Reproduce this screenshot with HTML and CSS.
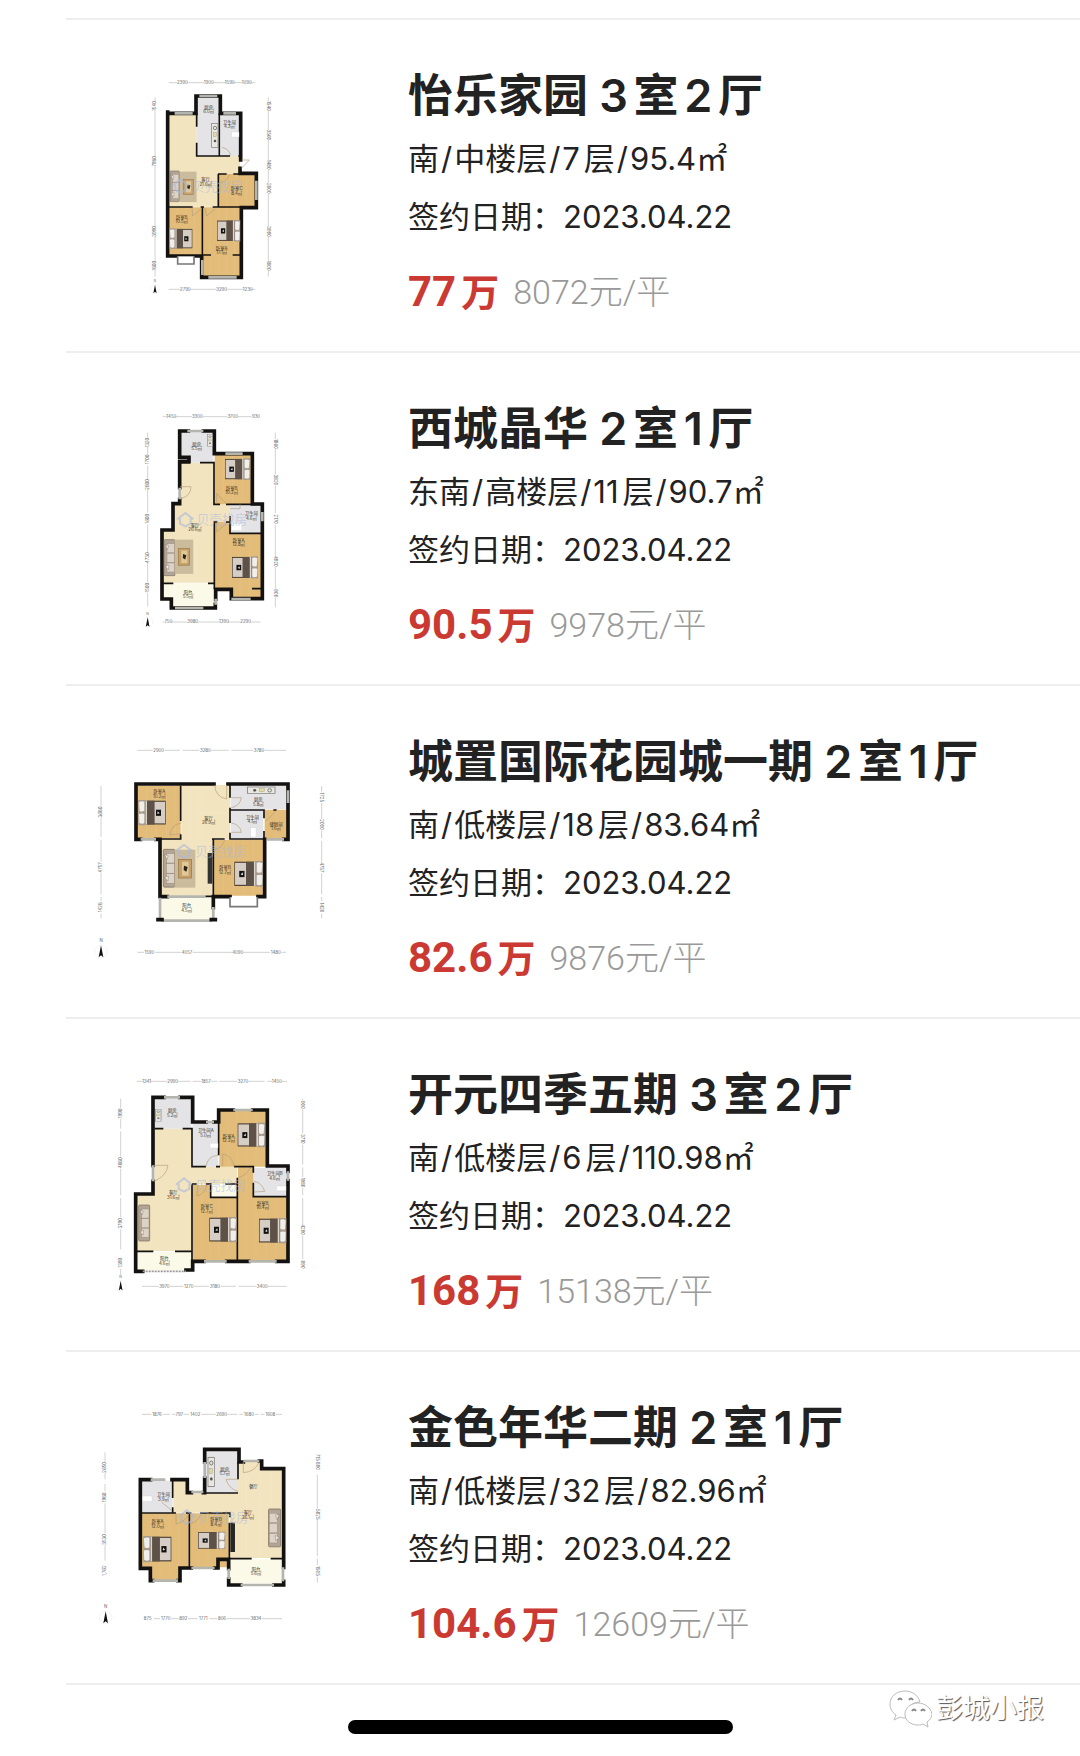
FILE: index.html
```html
<!DOCTYPE html>
<html lang="zh-CN">
<head>
  <meta charset="utf-8">
  <meta name="viewport" content="width=device-width, initial-scale=1.0">
  <title>成交房源</title>
  <link rel="stylesheet" href="styles.css">
</head>
<body>

  <!-- Shared furniture for the floor plans -->
  <svg class="defs" width="0" height="0" aria-hidden="true">
    <defs>
      <g id="bed">
        <rect x="0" y="2" width="72" height="66" fill="#453b33"/>
        <rect x="2" y="5" width="32" height="60" fill="#d6cec5"/>
        <rect x="34" y="2" width="22" height="66" fill="#5d5148"/>
        <rect x="56" y="2" width="5" height="66" fill="#ddd6cd"/>
        <rect x="61" y="0" width="21" height="70" fill="#a89c90"/>
        <path d="M64 5 Q72 2 80 6 L78 31 Q70 34 64 30 Z M64 39 Q72 36 80 39 L79 64 Q70 68 64 64 Z" fill="#f1efec"/>
        <rect x="14" y="27" width="15" height="17" fill="#111"/>
        <path d="M18 37 L24 31 L25 39 Z" fill="#ddd"/>
      </g>
      <g id="sofa">
        <rect x="0" y="0" width="33" height="108" rx="3" fill="#b3a594" stroke="#75695d" stroke-width="2"/>
        <rect x="9" y="12" width="22" height="27" fill="#dcd2c6" stroke="#887b6e" stroke-width="1"/>
        <rect x="9" y="41" width="22" height="27" fill="#dcd2c6" stroke="#887b6e" stroke-width="1"/>
        <rect x="9" y="70" width="22" height="27" fill="#dcd2c6" stroke="#887b6e" stroke-width="1"/>
        <path d="M4 15 L14 18 L10 30 Z M4 80 L15 76 L13 91 Z" fill="#eee9e3" stroke="#665b51" stroke-width="1"/>
      </g>
      <g id="rug">
        <rect x="0" y="0" width="62" height="114" fill="#cbbb9d"/>
        <rect x="12" y="29" width="38" height="56" fill="#c6a16a" stroke="#927340" stroke-width="2"/>
        <rect x="22" y="36" width="20" height="42" fill="#dfc798"/>
        <path d="M28 48 L39 52 L35 66 L27 61 Z" fill="#29231c"/>
      </g>
      <g id="stove">
        <rect x="0" y="0" width="19" height="72" fill="#e9e7df" stroke="#777" stroke-width="2"/>
        <circle cx="10" cy="14" r="5" fill="none" stroke="#555" stroke-width="2"/>
        <rect x="5" y="28" width="9" height="12" fill="#e4dc9b" stroke="#888" stroke-width="1"/>
        <circle cx="10" cy="53" r="4" fill="#555"/>
      </g>
      <g id="north">
        <circle cx="0" cy="0" r="19" fill="none" stroke="#eee" stroke-width="2"/>
        <path d="M0 -18 L7 18 L0 12 L-7 18 Z" fill="#111"/>
        <text class="dim" x="0" y="-28">N</text>
      </g>
      <g id="brand">
        <path d="M0 23 L24 4 L48 23 M8 20 V36 L24 44 L40 36 V20" class="brand-mark"/>
        <text class="brand-name" x="58" y="38">贝壳找房</text>
      </g>
    </defs>
  </svg>

  <ul class="deal-list">

    <li class="deal">
      <svg class="plan" viewBox="-150 18 780 720" role="img" aria-label="怡乐家园户型图">
        <path class="living" d="M118 162H200V288H330V342H265V440H118Z"/>
        <path class="tile" d="M200 108H268V288H200Z M272 162H330V288H272Z"/>
        <path class="wood" d="M266 342H378V442H266Z M118 442H215V585H118Z M218 442H333V650H218Z"/>
        <path class="grain" d="M290 344V440M320 344V440M350 344V440M142 444V583M168 444V583M194 444V583M240 444V648M265 444V648M290 444V648M313 444V648"/>
        <path class="wall" d="M114 160H198V108H271V160H332V300M330 325V340H379V443H334V652H215V588H113V156"/>
        <path class="wall thin" d="M200 160V200M200 248V288H300M268 160V288M325 288H334M265 342V440M264 342H290M310 342H332M114 441H188M212 441H222M248 441H378M217 441V588M220 585H243M308 585H334"/>
        <path class="window" d="M134 160H188M208 108H262M280 160H318M379 362V420M235 652H320M217 600V645"/>
        <path class="bay" d="M143 589V612H192V589"/>
        <path class="door" d="M334 325L358 300H335M276 262Q296 266 302 286M186 444L188 468L214 446M224 444L230 468L256 446M268 368Q290 366 298 345"/>
        <use href="#stove" x="245" y="190"/>
        <use href="#sofa" transform="translate(120 333) scale(.85)"/>
        <use href="#rug" transform="translate(150 335) scale(.8)"/>
        <use href="#bed" transform="translate(261 480) scale(.85 .92)"/>
        <use href="#bed" transform="translate(187 505) scale(-.84 .88)"/>
        <rect class="basin" x="305" y="216" width="22" height="15"/>
        <use href="#brand" x="128" y="354"/>
        <g class="label">
          <text x="236" y="147">厨房</text><text x="236" y="160">6.0㎡</text>
          <text x="298" y="192">卫生间</text><text x="298" y="205">4.3㎡</text>
          <text x="227" y="364">客厅</text><text x="227" y="377">21.6㎡</text>
          <text x="320" y="391">卧室C</text><text x="320" y="404">8.4㎡</text>
          <text x="155" y="477">卧室B</text><text x="155" y="490">10.5㎡</text>
          <text x="275" y="569">卧室A</text><text x="275" y="582">17.1㎡</text>
        </g>
        <path class="rule" d="M116 68H142M172 68H222M250 68H288M310 68H338M362 68H376M116 688H152M180 688H260M290 688H342M364 688H376M75 112V125M75 150V290M75 318V500M75 528V604M75 630V650M415 112V125M415 150V210M415 240V300M415 328V370M415 400V500M415 530V604M415 630V650"/>
        <g class="dim">
          <text x="157" y="72">2390</text><text x="236" y="72">1900</text><text x="299" y="72">1590</text><text x="350" y="72">1090</text>
          <text x="166" y="692">2790</text><text x="275" y="692">3290</text><text x="353" y="692">1230</text>
          <text transform="rotate(-90 79 138)" x="79" y="138">1540</text><text transform="rotate(-90 79 304)" x="79" y="304">7980</text><text transform="rotate(-90 79 514)" x="79" y="514">3990</text><text transform="rotate(-90 79 617)" x="79" y="617">1800</text>
          <text transform="rotate(90 411 138)" x="411" y="138">1540</text><text transform="rotate(90 411 225)" x="411" y="225">3560</text><text transform="rotate(90 411 314)" x="411" y="314">1480</text><text transform="rotate(90 411 385)" x="411" y="385">2800</text><text transform="rotate(90 411 515)" x="411" y="515">3990</text><text transform="rotate(90 411 617)" x="411" y="617">1800</text>
        </g>
        <use href="#north" transform="translate(75 687) scale(.7)"/>
      </svg>
      <div class="info">
        <h2>怡乐家园 3室2厅</h2>
        <p class="detail">南<i>/</i>中楼层<i>/</i>7层<i>/</i>95.4㎡</p>
        <p class="detail">签约日期：2023.04.22</p>
        <p class="price"><strong>77<span>万</span></strong><em>8072元/平</em></p>
      </div>
    </li>

    <li class="deal">
      <svg class="plan" viewBox="-120 9 780 720" role="img" aria-label="西城晶华户型图">
        <path class="living" d="M180 200H282V325H330V378H282V560H130V402H160V325H180Z"/>
        <path class="tile" d="M182 106H280V200H182Z M330 328H425V410H330Z"/>
        <path class="wood" d="M284 175H395V325H284Z M284 378H330V412H425V608H335V580H284Z"/>
        <path class="balcony" d="M130 562H282V635H155V608H130Z"/>
        <path class="grain" d="M310 178V322M338 178V322M366 178V322M306 400V578M332 415V578M360 415V606M388 415V606"/>
        <path class="wall" d="M205 105H179V184H207V197H179V275M179 310V323H159V402H126V609H154V636H286V625M250 105H283V173H397V324H427V608H334V580H287V610"/>
        <path class="wall thin" d="M180 200H210M240 200H282V325H300M318 325H430M283 378H292M318 378H330M330 360V412H428M283 376V580M128 562H160M264 562H284M396 578H428"/>
        <path class="window" d="M202 105H250M316 173H368M427 348V376M334 609H392M165 636H250M179 275V310M287 608V626"/>
        <path class="door" d="M180 272H213Q213 300 182 308M290 322V292L318 322M290 380V408L318 382M330 338H360V325"/>
        <rect class="basin" x="335" y="382" width="30" height="22"/>
        <use href="#stove" transform="translate(262 115) scale(.8 .5)"/>
        <use href="#sofa" x="132" y="431"/>
        <use href="#rug" transform="translate(164 431) scale(.9)"/>
        <use href="#bed" transform="translate(315 187) scale(.92)"/>
        <use href="#bed" transform="translate(336 481) scale(.95)"/>
        <use href="#brand" x="172" y="347"/>
        <g class="label">
          <text x="230" y="150">厨房</text><text x="230" y="163">5.5㎡</text>
          <text x="335" y="282">卧室B</text><text x="335" y="295">10.2㎡</text>
          <text x="394" y="358">卫生间</text><text x="394" y="371">4.6㎡</text>
          <text x="225" y="392">客厅</text><text x="225" y="405">26.6㎡</text>
          <text x="356" y="437">卧室A</text><text x="356" y="450">12.8㎡</text>
          <text x="204" y="594">阳台</text><text x="204" y="607">5.5㎡</text>
        </g>
        <path class="rule" d="M128 62H142M166 62H216M248 62H322M354 62H395M128 678H134M154 678H202M234 678H300M324 678H362M392 678H422M83 110V125M83 152V176M83 208V250M83 280V350M83 385V470M83 500V560M83 590V632M466 110V130M466 158V236M466 268V352M466 386V480M466 512V580M466 605V634"/>
        <g class="dim">
          <text x="154" y="66">1450</text><text x="232" y="66">3300</text><text x="338" y="66">3700</text><text x="408" y="66">930</text>
          <text x="145" y="682">750</text><text x="218" y="682">3980</text><text x="312" y="682">1390</text><text x="377" y="682">2290</text>
          <text transform="rotate(-90 87 140)" x="87" y="140">1320</text><text transform="rotate(-90 87 190)" x="87" y="190">1700</text><text transform="rotate(-90 87 265)" x="87" y="265">2800</text><text transform="rotate(-90 87 368)" x="87" y="368">1600</text><text transform="rotate(-90 87 485)" x="87" y="485">4730</text><text transform="rotate(-90 87 575)" x="87" y="575">1500</text>
          <text transform="rotate(90 462 144)" x="462" y="144">1860</text><text transform="rotate(90 462 252)" x="462" y="252">3820</text><text transform="rotate(90 462 370)" x="462" y="370">2170</text><text transform="rotate(90 462 496)" x="462" y="496">4920</text><text transform="rotate(90 462 592)" x="462" y="592">900</text>
        </g>
        <use href="#north" transform="translate(83 678) scale(.8)"/>
      </svg>
      <div class="info">
        <h2>西城晶华 2室1厅</h2>
        <p class="detail">东南<i>/</i>高楼层<i>/</i>11层<i>/</i>90.7㎡</p>
        <p class="detail">签约日期：2023.04.22</p>
        <p class="price"><strong>90.5<span>万</span></strong><em>9978元/平</em></p>
      </div>
    </li>

    <li class="deal">
      <svg class="plan" viewBox="0 3 780 720" role="img" aria-label="城置国际花园城一期户型图">
        <path class="living" d="M304 162H450V324H398V494H244V324H304Z"/>
        <path class="tile" d="M452 162H622V234H452Z M452 238H550V324H452Z"/>
        <path class="wood" d="M172 164H302V322H172Z M400 326H550V494H400Z M554 236H622V326H554Z"/>
        <path class="balcony" d="M242 498H400V566H242Z M452 498H530V526H452Z"/>
        <path class="grain" d="M200 166V320M230 166V320M260 166V320M285 166V320M430 328V492M460 328V492M490 328V492M520 328V492M590 238V324M330 165V492M360 165V492M250 400H396M306 245H450"/>
        <path class="wall" d="M402 159H168V325H182M228 325H240V497H262M444 159H624V325H612M554 325V497H534M450 497H400V530"/>
        <path class="wall thin" d="M302 164V270M302 310V324H240M450 160V200M450 230V276M450 305V324H552M452 237H552V262M552 300V326M400 324V500M396 324H434M376 496H400M580 237H590"/>
        <path class="window" d="M182 325H228M624 178V216M560 325H612M240 500V562M400 528V562M244 569H396M262 497H376"/>
        <path class="bay" d="M450 499V527H532V499"/>
        <path class="wall" d="M234 566H246M394 566H406"/>
        <path class="door" d="M404 162Q406 198 440 204V162M454 200H484Q480 225 454 230M454 276Q480 280 484 304H454M304 276Q274 280 270 312L302 308M402 356Q428 352 434 326M556 272L592 236"/>
        <use href="#stove" transform="translate(585 168) rotate(90) scale(1 1.15)"/>
        <rect class="basin" x="512" y="290" width="16" height="28"/>
        <use href="#sofa" transform="translate(250 355) scale(1.05)"/>
        <use href="#rug" x="284" y="356"/>
        <rect x="383" y="366" width="14" height="92" fill="#333"/>
        <use href="#bed" transform="translate(257 207) scale(-1 1.08)"/>
        <use href="#bed" transform="translate(463 390) scale(1.05 1.1)"/>
        <use href="#brand" x="288" y="337"/>
        <g class="label">
          <text x="238" y="187">卧室A</text><text x="238" y="201">10.2㎡</text>
          <text x="386" y="266">客厅</text><text x="386" y="280">26.9㎡</text>
          <text x="535" y="211">厨房</text><text x="535" y="225">5.8㎡</text>
          <text x="517" y="263">卫生间</text><text x="517" y="277">4.1㎡</text>
          <text x="588" y="284">储物间</text><text x="588" y="298">1.6㎡</text>
          <text x="435" y="414">卧室B</text><text x="435" y="428">12.7㎡</text>
          <text x="320" y="528">阳台</text><text x="320" y="542">4.5㎡</text>
        </g>
        <path class="rule" d="M172 58H218M254 58H300M308 58H358M394 58H446M454 58H520M554 58H618M172 664H192M226 664H304M338 664H456M490 664H570M604 664H618M63 165V226M63 260V318M63 326V392M63 426V490M63 498V510M63 548V562M725 165V182M725 216V264M725 298V322M725 330V392M725 426V490M725 498V510M725 548V562"/>
        <g class="dim">
          <text x="236" y="62">2900</text><text x="376" y="62">3280</text><text x="537" y="62">3780</text>
          <text x="208" y="668">1590</text><text x="321" y="668">4057</text><text x="473" y="668">4090</text><text x="587" y="668">1480</text>
          <text transform="rotate(-90 67 243)" x="67" y="243">3680</text><text transform="rotate(-90 67 409)" x="67" y="409">4757</text><text transform="rotate(-90 67 529)" x="67" y="529">1428</text>
          <text transform="rotate(90 721 199)" x="721" y="199">1725</text><text transform="rotate(90 721 281)" x="721" y="281">2000</text><text transform="rotate(90 721 409)" x="721" y="409">4757</text><text transform="rotate(90 721 529)" x="721" y="529">1428</text>
        </g>
        <use href="#north" x="63" y="661"/>
      </svg>
      <div class="info">
        <h2>城置国际花园城一期 2室1厅</h2>
        <p class="detail">南<i>/</i>低楼层<i>/</i>18层<i>/</i>83.64㎡</p>
        <p class="detail">签约日期：2023.04.22</p>
        <p class="price"><strong>82.6<span>万</span></strong><em>9876元/平</em></p>
      </div>
    </li>

    <li class="deal">
      <svg class="plan" viewBox="-60 -3 780 720" role="img" aria-label="开元四季五期户型图">
        <path class="living" d="M163 188H274V302H412V354H274V555H110V384H163Z"/>
        <path class="tile" d="M164 98H274V188H164Z M278 170H355V302H278Z M460 306H562V390H460Z"/>
        <path class="wood" d="M358 132H498V302H358Z M278 356H332V394H412V584H278Z M414 304H460V392H562V584H414Z"/>
        <path class="balcony" d="M110 558H274V614H110Z M334 356H410V392H334Z"/>
        <path class="grain" d="M385 135V300M412 135V300M440 135V300M468 135V300M304 358V582M330 396V582M356 396V582M384 396V582M440 306V582M468 394V582M498 394V582M528 394V582"/>
        <path class="wall" d="M192 94H159V298M159 346V384H107V616H128M240 94H278V168H318M342 168H356V132H400M458 132H502V300H564V316M564 344V586H530M446 586H380M312 586H278V612H258"/>
        <path class="wall thin" d="M164 188H190M248 188H276V302H318M348 302H360M356 132V268M402 302H460V320M460 350V392H566M276 354H290M318 354H332V394H412M376 354H412V586M412 335V354M276 354V586M108 556H160M225 556H276M312 586H278"/>
        <path class="window" d="M192 94H240M318 168H342M400 132H458M564 316V344M312 586H380M446 586H530M159 298V346"/>
        <path d="M128 616H258" fill="none" stroke="#999" stroke-width="5" stroke-dasharray="6 3"/>
        <path class="door" d="M160 298H204Q200 330 162 346M318 302Q322 270 354 268M368 302V264Q398 270 402 302M462 346Q486 350 494 376L462 378M292 356V390Q316 382 320 356M416 334Q436 330 452 306"/>
        <use href="#stove" transform="translate(166 130) scale(.9 .5)"/>
        <path class="basin" d="M330 232H354V246H330Z M530 360H558V374H530Z"/>
        <use href="#sofa" x="116" y="417"/>
        <use href="#bed" transform="translate(413 170) scale(1 1.05)"/>
        <use href="#bed" transform="translate(328 453) scale(1 1.08)"/>
        <use href="#bed" transform="translate(477 456) scale(1 1.08)"/>
        <use href="#brand" x="228" y="333"/>
        <g class="label">
          <text x="217" y="138">厨房</text><text x="217" y="152">5.2㎡</text>
          <text x="317" y="199">卫生间A</text><text x="317" y="213">5.0㎡</text>
          <text x="386" y="215">卧室A</text><text x="386" y="229">12.2㎡</text>
          <text x="524" y="327">卫生间B</text><text x="524" y="341">4.6㎡</text>
          <text x="220" y="384">客厅</text><text x="220" y="398">31.6㎡</text>
          <text x="320" y="426">卧室C</text><text x="320" y="440">12.7㎡</text>
          <text x="488" y="416">卧室B</text><text x="488" y="430">16.4㎡</text>
          <text x="193" y="582">阳台</text><text x="193" y="596">4.6㎡</text>
        </g>
        <path class="rule" d="M110 46H128M152 46H202M234 46H272M278 46H304M332 46H352M358 46H412M446 46H494M502 46H516M544 46H562M126 661H176M210 661H250M282 661H328M362 661H408M416 661H470M504 661H560M62 98V126M62 158V188M62 196V272M62 308V388M62 396V454M62 490V550M62 608V628M608 98V104M608 130V202M608 236V296M608 304V334M608 366V388M608 396V474M608 508V580"/>
        <g class="dim">
          <text x="140" y="50">1341</text><text x="218" y="50">2990</text><text x="318" y="50">1857</text><text x="429" y="50">3270</text><text x="530" y="50">1450</text>
          <text x="193" y="665">3970</text><text x="266" y="665">1270</text><text x="345" y="665">3180</text><text x="487" y="665">3400</text>
          <text transform="rotate(-90 66 142)" x="66" y="142">1990</text><text transform="rotate(-90 66 290)" x="66" y="290">4880</text><text transform="rotate(-90 66 472)" x="66" y="472">3790</text><text transform="rotate(-90 66 590)" x="66" y="590">1390</text>
          <text transform="rotate(90 604 117)" x="604" y="117">900</text><text transform="rotate(90 604 219)" x="604" y="219">3710</text><text transform="rotate(90 604 350)" x="604" y="350">1980</text><text transform="rotate(90 604 491)" x="604" y="491">4290</text><text transform="rotate(90 604 596)" x="604" y="596">890</text>
        </g>
        <use href="#north" transform="translate(62 659) scale(.8)"/>
      </svg>
      <div class="info">
        <h2>开元四季五期 3室2厅</h2>
        <p class="detail">南<i>/</i>低楼层<i>/</i>6层<i>/</i>110.98㎡</p>
        <p class="detail">签约日期：2023.04.22</p>
        <p class="price"><strong>168<span>万</span></strong><em>15138元/平</em></p>
      </div>
    </li>

    <li class="deal">
      <svg class="plan" viewBox="0 -8 780 720" role="img" aria-label="金色年华二期户型图">
        <path class="living" d="M280 240H320V278H474V180H545V204H606V472H450V336H280Z"/>
        <path class="tile" d="M376 148H474V276H376Z M186 240H278V334H186Z"/>
        <path class="wood" d="M186 338H326V502H298V538H212V502H186Z M330 338H446V500H330Z"/>
        <path class="balcony" d="M450 476H606V548H450Z"/>
        <path class="grain" d="M212 340V536M240 340V536M268 340V536M296 340V500M356 340V498M384 340V498M412 340V498M500 210V470M540 210V470M575 210V470"/>
        <path class="wall" d="M212 237H181V503H211V540H218M276 237H322V276H334M370 276H374V232M374 184V146H477V184H490M538 181H545V204H611V500M611 542V553H582M482 553H446V535M446 504V476H414V502H404M334 502H300V540H294"/>
        <path class="wall thin" d="M278 238V292M278 320V336M186 337H288M374 277H474M474 184V236M328 337V502M318 337H334M360 337H450V350M448 366V476M448 474H515M572 474H610"/>
        <path class="window" d="M212 237H256M334 274H370M374 184V232M218 540H294M334 502H404M482 553H582M446 504V535M609 500V542M490 181H538"/>
        <path class="door" d="M490 182V216Q524 214 538 184M474 272Q446 264 438 236H472M244 304L276 330M288 338V370Q316 364 326 340M334 368Q356 362 362 340"/>
        <use href="#stove" transform="translate(384 170) scale(1 1.22)"/>
        <path class="basin" d="M188 286H216V302H188Z"/>
        <use href="#sofa" transform="translate(602 325) scale(-1.1 1.05)"/>
        <rect x="451" y="366" width="14" height="88" fill="#292725"/>
        <use href="#bed" transform="translate(274 406) scale(-1.03 1.12)"/>
        <use href="#bed" transform="translate(354 393) scale(1 .75)"/>
        <use href="#brand" x="296" y="325"/>
        <g class="label">
          <text x="250" y="286">卫生间</text><text x="250" y="300">3.9㎡</text>
          <text x="434" y="210">厨房</text><text x="434" y="224">5.7㎡</text>
          <text x="520" y="263">餐厅</text>
          <text x="504" y="340">客厅</text><text x="504" y="354">26.1㎡</text>
          <text x="233" y="368">卧室A</text><text x="233" y="382">12.0㎡</text>
          <text x="408" y="361">卧室B</text><text x="408" y="375">8.4㎡</text>
          <text x="528" y="510">阳台</text><text x="528" y="524">5.6㎡</text>
        </g>
        <path class="rule" d="M186 41H214M248 41H270M276 41H286M310 41H328M364 41H408M442 41H472M478 41H490M524 41H536M542 41H554M588 41H606M222 654H240M274 654H296M324 654H352M388 654H412M440 654H510M546 654H606M75 155V184M75 216V236M75 250V272M75 308V398M75 434V480M712 222V324M712 358V466M712 474V494M712 528V546"/>
        <g class="dim">
          <text x="231" y="45">1876</text><text x="298" y="45">797</text><text x="346" y="45">1402</text><text x="425" y="45">2690</text><text x="507" y="45">1680</text><text x="571" y="45">1608</text>
          <text x="203" y="658">875</text><text x="257" y="658">1770</text><text x="310" y="658">892</text><text x="370" y="658">1771</text><text x="426" y="658">806</text><text x="528" y="658">3834</text>
          <text transform="rotate(-90 79 200)" x="79" y="200">2650</text><text transform="rotate(-90 79 290)" x="79" y="290">1980</text><text transform="rotate(-90 79 416)" x="79" y="416">3530</text><text transform="rotate(-90 79 510)" x="79" y="510">1,762</text>
          <text transform="rotate(90 708 184)" x="708" y="184">715 890</text><text transform="rotate(90 708 341)" x="708" y="341">5825</text><text transform="rotate(90 708 511)" x="708" y="511">1505</text>
        </g>
        <use href="#north" x="77" y="650"/>
      </svg>
      <div class="info">
        <h2>金色年华二期 2室1厅</h2>
        <p class="detail">南<i>/</i>低楼层<i>/</i>32层<i>/</i>82.96㎡</p>
        <p class="detail">签约日期：2023.04.22</p>
        <p class="price"><strong>104.6<span>万</span></strong><em>12609元/平</em></p>
      </div>
    </li>

  </ul>

  <footer>
    <div class="home-bar"></div>
    <div class="account">
      <svg viewBox="0 0 44 40" width="44" height="40" aria-hidden="true">
        <path d="M17 2C8 2 2 8 2 15C2 20 4 23 8 26L6 31L12 28C14 29 16 29 18 29C17 20 23 13 32 13C30 6 24 2 17 2Z"/>
        <path d="M30 14C23 14 17 19 17 25C17 32 23 36 30 36C32 36 34 36 35 35L40 38L39 33C42 31 44 28 44 25C43 19 37 14 30 14Z"/>
        <path class="eyes" d="M10 11Q12 8 14 11M21 11Q23 8 25 11M24 22Q26 19 28 22M33 22Q35 19 37 22"/>
      </svg>
      <span>彭城小报</span>
    </div>
  </footer>

</body>
</html>
```
FILE: styles.css
```css
* {
  box-sizing: border-box;
  margin: 0;
  padding: 0;
}

body {
  font-family: Inter, "Noto Sans CJK SC", sans-serif;
  background: #fff;
  color: #222;
  overflow-x: hidden;
}

.defs {
  position: absolute;
}

/* Deal list */
.deal-list {
  list-style: none;
  margin: 18px 0 0 66px;
  border-top: 2px solid #eee;
}

.deal {
  display: flex;
  align-items: flex-start;
  gap: 68px;
  padding: 46px 0 33px 14px;
  border-bottom: 2px solid #eee;
}

.info {
  flex: 1;
  white-space: nowrap;
}

.info h2 {
  font-size: 45px;
  font-weight: 600;
  line-height: 60px;
  margin-bottom: 4px;
  text-autospace: normal;
}

.detail {
  font-size: 31px;
  line-height: 58px;
  text-autospace: normal;
}

.detail i {
  font-style: normal;
  margin: 0 2px;
}

.price {
  display: flex;
  align-items: center;
  gap: 14px;
  height: 52px;
  line-height: 52px;
  margin-top: 20px;
}

.price strong {
  font-family: Roboto, "Noto Sans CJK SC", sans-serif;
  font-size: 42px;
  font-weight: 700;
  color: #cb3933;
}

.price span {
  font-size: 38px;
  margin-left: 5px;
}

.price em {
  font-family: Roboto, "Noto Sans CJK SC", sans-serif;
  font-size: 34px;
  font-style: normal;
  font-weight: 300;
  color: #999;
}

/* Floor plans */
.plan {
  width: 260px;
  height: 240px;
  flex: none;
}

.living { fill: #f3e4c0; }
.tile { fill: #e4e4e6; }
.wood { fill: #e2bc78; }
.balcony { fill: #fbfae9; }

.grain {
  stroke: #fff;
  stroke-opacity: .15;
  stroke-width: 2;
}

.wall {
  fill: none;
  stroke: #141210;
  stroke-width: 11;
  stroke-linecap: square;
}

.wall.thin {
  stroke-width: 5;
  stroke-linecap: butt;
}

.window {
  fill: none;
  stroke: #b5b5b0;
  stroke-width: 8;
}

.bay {
  fill: #fff;
  stroke: #777;
  stroke-width: 5;
}

.door {
  fill: none;
  stroke: #b59e7c;
  stroke-width: 2;
}

.basin {
  fill: #fff;
  stroke: #ccc;
  stroke-width: 1;
}

.label {
  font-size: 13px;
  fill: #3a3026;
  text-anchor: middle;
}

.dim {
  font-size: 13px;
  fill: #666;
  text-anchor: middle;
}

.rule {
  fill: none;
  stroke: #bbb;
  stroke-width: 2;
}

.brand-mark {
  fill: none;
  stroke: #a9b8dc;
  stroke-opacity: .6;
  stroke-width: 6;
}

.brand-name {
  font-size: 38px;
  fill: #a9b8dc;
  fill-opacity: .55;
}

/* Bottom area */
footer {
  position: relative;
  padding: 35px 0 22px;
}

.home-bar {
  width: 385px;
  height: 14px;
  margin: 0 auto;
  border-radius: 7px;
  background: #000;
}

.account {
  position: absolute;
  top: 4px;
  right: 36px;
  display: flex;
  align-items: center;
  gap: 4px;
  font-size: 27px;
  line-height: 40px;
  color: #fff;
  text-shadow: 1px 1px 1px #555;
}

.account svg {
  fill: #fff;
  stroke: #bbb;
  stroke-width: 1;
}

.account .eyes {
  fill: none;
  stroke: #888;
  stroke-width: 2;
}
```
